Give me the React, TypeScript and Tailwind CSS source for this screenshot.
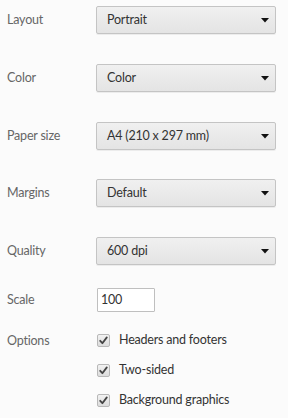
import React from "react";

const font = { fontFamily: '"Segoe UI", Lato, "Noto Sans", sans-serif' };

function Select({ value }: { value: string }) {
  return (
    <div className="flex h-[28px] w-[180px] items-center justify-between rounded-[2px] border border-[#c4c4c4] bg-gradient-to-b from-[#f0f0f0] to-[#e4e4e4] pl-[10px] pr-[5px] shadow-[0_1px_0_rgba(0,0,0,0.06)]">
      <span className="text-[12.5px] tracking-[-0.2px] text-[#333]">{value}</span>
      <svg width="10" height="6" viewBox="0 0 10 6">
        <polygon points="1,1 9,1 5,5.5" fill="#111" />
      </svg>
    </div>
  );
}

function Check({ label }: { label: string }) {
  return (
    <div className="flex h-[13px] items-center">
      <div className="flex h-[13px] w-[13px] items-center justify-center rounded-[2px] border border-[#b8b8b8] bg-gradient-to-b from-[#f2f2f2] to-[#dcdcdc]">
        <svg width="11" height="11" viewBox="0 0 11 11">
          <path d="M2.2 5.8 L4.4 8.2 L8.8 2.4" stroke="#444" strokeWidth="1.8" fill="none" strokeLinecap="round" strokeLinejoin="round" />
        </svg>
      </div>
      <span className="ml-[9px] text-[12.5px] tracking-[-0.2px] text-[#333]">{label}</span>
    </div>
  );
}

function Row({ label, value, mt }: { label: string; value: string; mt: string }) {
  return (
    <div className={`flex items-center ${mt}`}>
      <div className="w-[89px] text-[12.5px] tracking-[-0.2px] text-[#666]">{label}</div>
      <Select value={value} />
    </div>
  );
}

export default function App() {
  return (
    <div className="h-[418px] w-[288px] overflow-hidden bg-[#fbfbfb] pl-[7px] pt-[6px]" style={font}>
      <Row label="Layout" value="Portrait" mt="mt-0" />
      <Row label="Color" value="Color" mt="mt-[30px]" />
      <Row label="Paper size" value="A4 (210 x 297 mm)" mt="mt-[30px]" />
      <Row label="Margins" value="Default" mt="mt-[29px]" />
      <Row label="Quality" value="600 dpi" mt="mt-[30px]" />
      <div className="mt-[23px] flex items-center">
        <div className="w-[90px] text-[12.5px] tracking-[-0.2px] text-[#666]">Scale</div>
        <div className="flex h-[24px] w-[58px] items-center rounded-[1px] border border-[#bfbfbf] bg-white pl-[3px] text-[12.5px] tracking-[-0.2px] text-[#333]">
          100
        </div>
      </div>
      <div className="mt-[22px] flex">
        <div className="w-[90px] text-[12.5px] leading-[13px] tracking-[-0.2px] text-[#666]">Options</div>
        <div className="flex flex-col gap-[17px]">
          <Check label="Headers and footers" />
          <Check label="Two-sided" />
          <Check label="Background graphics" />
        </div>
      </div>
    </div>
  );
}
